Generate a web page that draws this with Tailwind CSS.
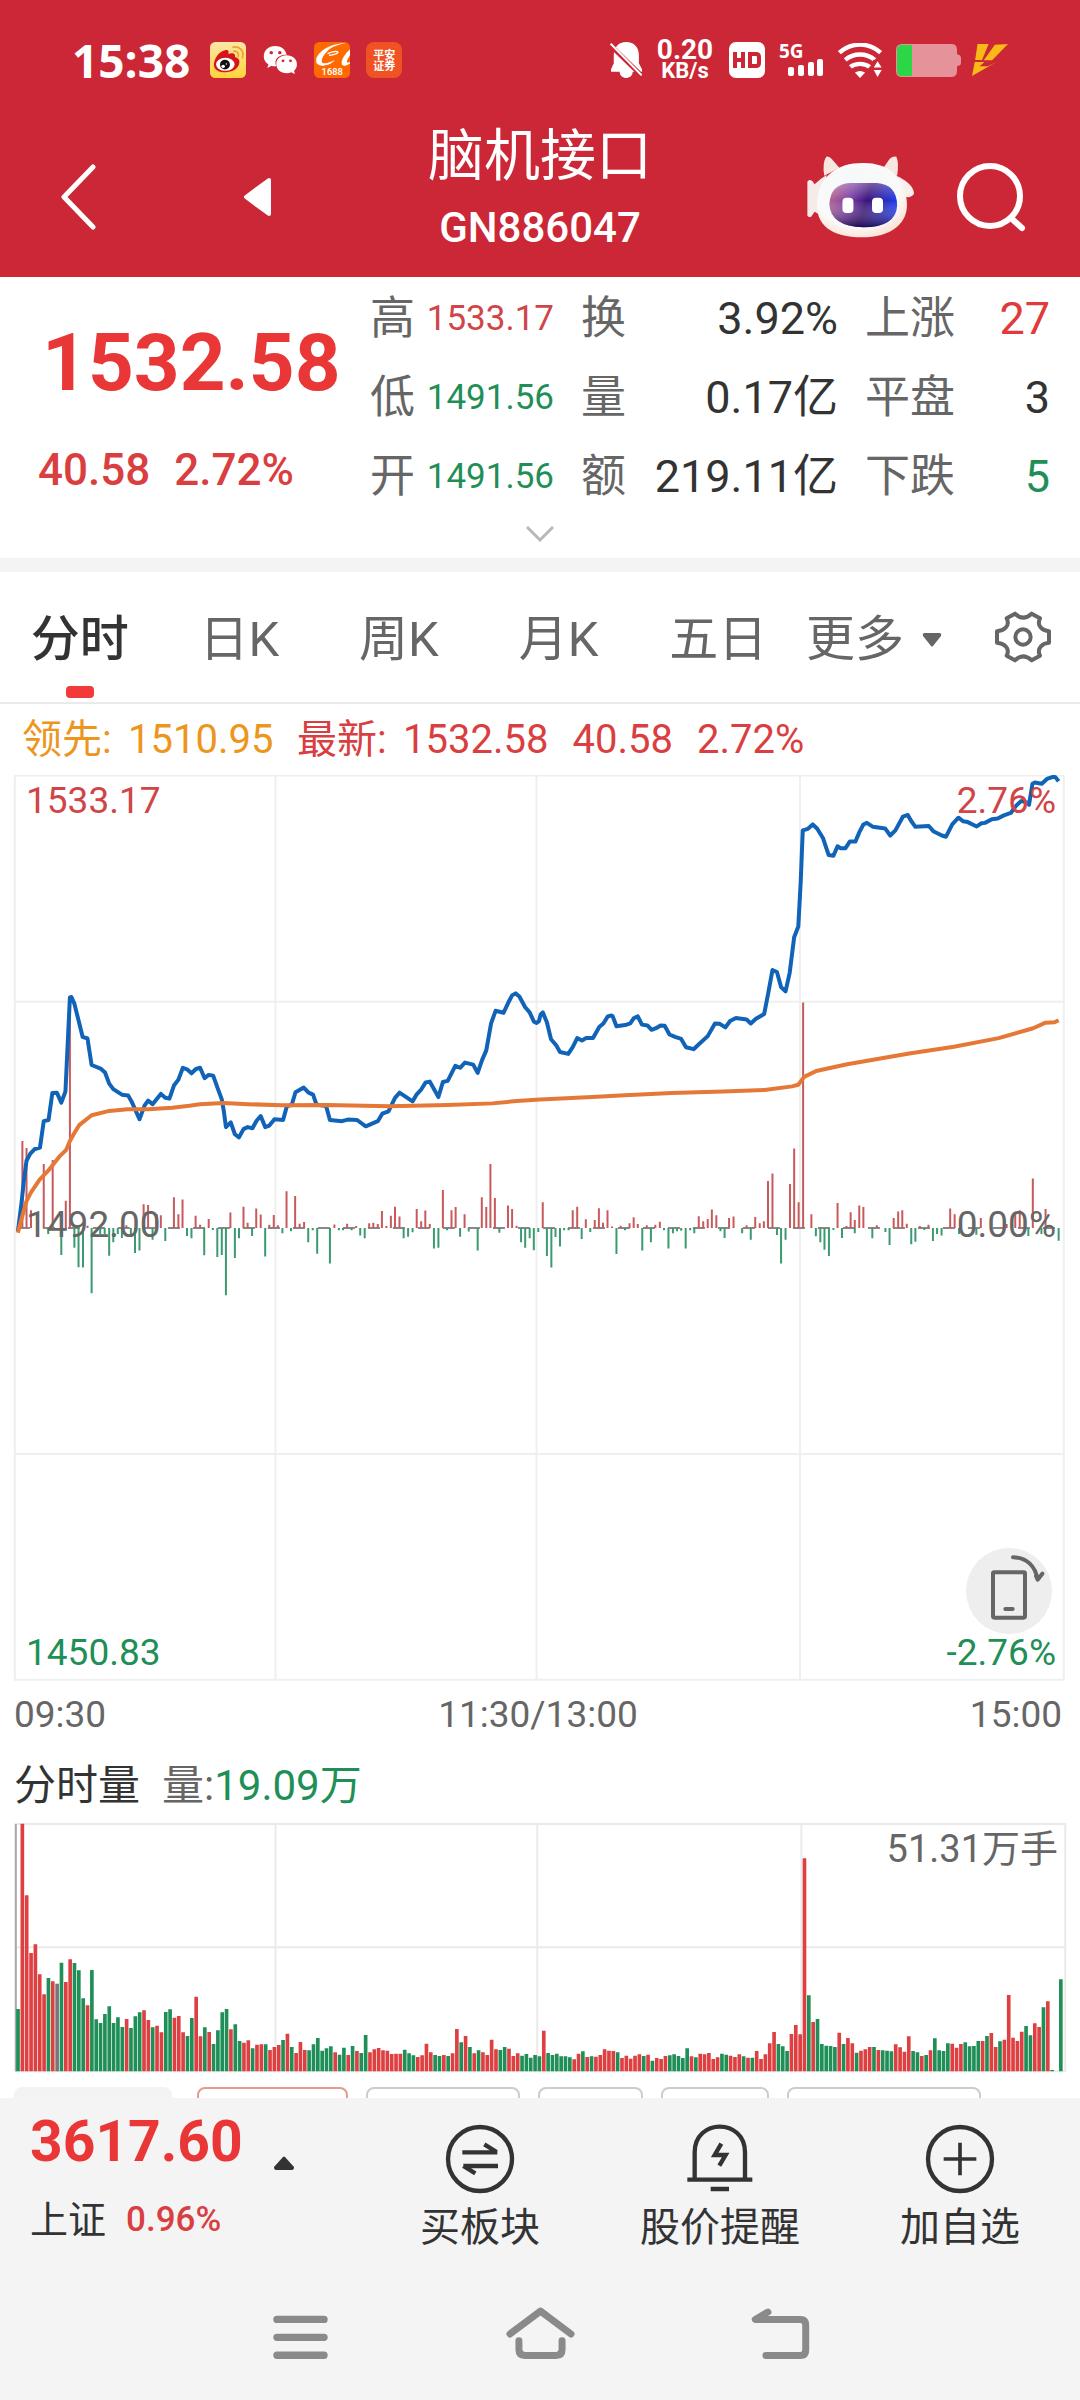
<!DOCTYPE html>
<html lang="zh-CN">
<head>
  <meta charset="UTF-8">
  <meta name="viewport" content="width=device-width, initial-scale=1">
  <title>脑机接口 GN886047</title>
  <script src="https://cdn.jsdelivr.net/npm/@tailwindcss/browser@4"></script>
</head>
<body class="bg-white font-[Roboto,'Noto_Sans_CJK_SC',sans-serif] text-[#333]">

  <header class="bg-[#cb2736] text-white">
    <!-- status bar -->
    <div class="flex h-[120px] items-center justify-between pr-[72px] pl-[72px] font-['Open_Sans','Noto_Sans_CJK_SC',sans-serif] font-bold">
      <div class="flex items-center gap-4">
        <span class="mr-1 text-[46px] leading-[48px]">15:38</span>
        <svg class="size-9" viewBox="610 129 101 105" preserveAspectRatio="none">
          <defs>
            <linearGradient id="weibo" x1="0" y1="0" x2="0" y2="1"><stop offset="0" stop-color="#fbe6a6"/><stop offset="1" stop-color="#ffd43a"/></linearGradient>
          </defs>
          <rect x="610" y="129" width="101" height="105" rx="15" fill="url(#weibo)"/>
          <path d="M621 195C621 178 635 157 652 153C662 151 664 158 661 164C672 159 683 162 680 173C692 176 695 186 691 195C686 210 668 217 651 217C634 217 621 209 621 195Z" fill="#d5141c"/>
          <ellipse cx="653" cy="194" rx="26" ry="19" fill="#fff"/>
          <circle cx="652" cy="195" r="14" fill="#111"/>
          <circle cx="647" cy="200" r="5" fill="#fff"/><circle cx="656" cy="193" r="2" fill="#fff"/>
          <path d="M677 156C686 154 692 162 689 171M675 144C694 140 707 157 701 175" fill="none" stroke="#f0a02c" stroke-width="5" stroke-linecap="round"/>
        </svg>
        <svg class="size-9" viewBox="762 129 101 105" preserveAspectRatio="none">
          <path d="M799 141C780 141 767 154 767 171C767 181 772 189 780 194L777 205L789 198C794 200 798 200 802 200C794 180 808 165 831 166C828 151 815 141 799 141Z" fill="#fff"/>
          <path d="M831 168C814 168 802 179 802 194C802 209 815 220 831 220C836 220 840 219 844 217L854 222L852 213C857 208 860 202 860 194C860 179 847 168 831 168Z" fill="#fff"/>
          <g fill="#cb2736"><circle cx="788" cy="160" r="5"/><circle cx="812" cy="160" r="5"/><circle cx="821" cy="184" r="4"/><circle cx="842" cy="184" r="4"/></g>
        </svg>
        <svg class="size-9" viewBox="915 129 101 105" preserveAspectRatio="none">
          <rect x="915" y="129" width="101" height="105" rx="15" fill="#ff6a00"/>
          <path d="M1006 131C975 133 936 145 923 173C917 190 924 199 942 198C955 197 968 190 974 181C959 191 940 195 937 187C935 177 944 165 955 153C964 143 984 136 1006 131Z" fill="#fff"/>
          <path d="M953 163C965 158 978 155 982 158C983 163 970 167 957 168" fill="none" stroke="#fff" stroke-width="4"/>
          <path d="M1016 150C1001 164 990 182 993 194C997 201 1008 198 1016 192V187C1006 192 1003 188 1016 168Z" fill="#fff"/>
          <text x="966" y="226" text-anchor="middle" fill="#fff" font-size="26" font-weight="600" font-family="Roboto">1688</text>
        </svg>
        <span class="flex size-9 flex-col items-center justify-center rounded-lg bg-[#f05223] text-[11px] leading-[11px]"><span>平安</span><span>证券</span></span>
      </div>

      <div class="flex items-center">
        <svg class="mr-[14px] h-9 w-8" viewBox="203 126 93 108" preserveAspectRatio="none">
          <path d="M214 166C214 142 228 126 250 126C273 126 287 142 287 166V190L296 208V215H269C268 240 232 240 231 215H206V208L214 190Z" fill="#fff"/>
          <path d="M200 132L300 232" stroke="#cb2736" stroke-width="14"/>
          <path d="M205 131L295 226" stroke="#fff" stroke-width="6"/>
        </svg>
        <span class="mr-[15px] flex w-[58px] flex-col items-center font-[Roboto] text-[28px] leading-[22px]"><span>0.20</span><span class="text-[22px] leading-[20px]">KB/s</span></span>
        <svg class="mr-3.5 size-9" viewBox="0 0 36 36">
          <rect width="36" height="36" rx="7" fill="#fff"/>
          <path d="M6 10V26M14 10V26M6 18H14M21 12H27Q30 12 30 15V21Q30 24 27 24H21Z" fill="none" stroke="#cb2736" stroke-width="4"/>
        </svg>
        <span class="relative mr-3.5 h-8 w-[45px]">
          <span class="absolute -top-1 left-0 text-[19px] leading-[22px]">5G</span>
          <svg class="absolute right-0 bottom-0 h-[18px] w-9" viewBox="0 0 36 18" fill="#fff">
            <rect y="9" width="6" height="9" rx="2"/><rect x="10" y="7" width="6" height="11" rx="2"/><rect x="20" y="4" width="6" height="14" rx="2"/><rect x="29" y="1" width="6" height="17" rx="2"/>
          </svg>
        </span>
        <svg class="mr-3.5 h-[35px] w-11" viewBox="866 128 128 104" preserveAspectRatio="none">
          <path d="M870 157C905 125 955 125 990 157M887 178C912 157 948 157 973 178M902 199C917 187 943 187 958 199" fill="none" stroke="#fff" stroke-width="13"/>
          <path d="M915 216Q930 206 945 216L930 232Z" fill="#fff"/>
          <path d="M968 178H994V232H968Z" fill="#cb2736"/>
          <path d="M970 201L981 182L993 201ZM970 208L981 229L993 208Z" fill="#fff"/>
        </svg>
        <svg class="mr-[11px] h-[33px] w-[65px]" viewBox="0 0 65 33">
          <path d="M6 0H56Q61 0 61 6V10Q65 11 65 14V19Q65 22 61 22V27Q61 33 55 33H6Q0 33 0 27V6Q0 0 6 0Z" fill="#e5929a"/>
          <path d="M6 1H16V32H6Q1 32 1 27V6Q1 1 6 1Z" fill="#2bd647"/>
        </svg>
        <svg class="h-8 w-9" viewBox="1254 135 104 92" preserveAspectRatio="none" fill="#f9b916">
          <path d="M1270 135H1302L1283 181H1263ZM1320 137L1358 135L1312 182H1288ZM1262 187H1290L1276 199H1300L1326 186L1254 227Z"/>
        </svg>
      </div>
    </div>

    <!-- title row -->
    <div class="grid h-[157px] grid-cols-[1fr_auto_1fr] items-center pb-1">
      <div class="flex items-center gap-[147px] pl-[60px]">
        <button aria-label="返回">
          <svg class="h-[66px] w-9" viewBox="0 0 36 66" fill="none" stroke="#fff" stroke-width="5" stroke-linecap="round" stroke-linejoin="round"><path d="M33 3L4 33L33 63"/></svg>
        </button>
        <button aria-label="上一个">
          <svg class="h-10 w-7" viewBox="0 0 28 40" fill="#fff" stroke="#fff" stroke-width="4" stroke-linejoin="round"><path d="M26 3V37L3 20Z"/></svg>
        </button>
      </div>
      <div class="self-start pt-1 text-center">
        <h1 class="text-[56px] leading-[64px]">脑机接口</h1>
        <p class="mt-4 text-[42px] leading-[48px] font-medium">GN886047</p>
      </div>
      <div class="flex items-center justify-end gap-10 pr-[54px]">
        <button aria-label="智能助手">
          <svg class="h-[86px] w-[110px]" viewBox="775 455 320 258" preserveAspectRatio="none">
            <defs>
              <linearGradient id="face" x1="0" y1=".3" x2="1" y2=".5"><stop offset="0" stop-color="#b5658f"/><stop offset=".3" stop-color="#7b3fa6"/><stop offset=".55" stop-color="#3a1479"/><stop offset=".8" stop-color="#2a2bbb"/><stop offset="1" stop-color="#1d3cf0"/></linearGradient>
              <linearGradient id="visor" x1="0" y1="0" x2="0" y2="1"><stop offset="0" stop-color="#fff" stop-opacity=".3"/><stop offset=".4" stop-color="#fff" stop-opacity="0"/><stop offset="1" stop-color="#12003c" stop-opacity=".7"/></linearGradient>
              <radialGradient id="head" cx=".45" cy=".4" r=".62"><stop offset="0" stop-color="#f4f6f8"/><stop offset=".75" stop-color="#fafafa"/><stop offset="1" stop-color="#fbe3d6"/></radialGradient>
            </defs>
            <path d="M779 640V538Q784 528 794 537L800 546Q815 530 835 518L820 640L800 628L790 643Q783 646 779 640Z" fill="#f7ebe9"/>
            <path d="M1042 522Q1090 548 1089 575Q1080 588 1062 583Z" fill="#f8efec"/>
            <path d="M828 520Q822 480 834 463Q842 460 850 470L872 496ZM1040 520Q1046 480 1038 463Q1026 460 1018 470L1002 494Z" fill="#f8e6e0"/>
            <path d="M938 482C1010 480 1064 520 1068 595C1076 665 1020 705 938 705C850 705 800 668 808 595C814 520 868 482 938 482Z" fill="url(#head)"/>
            <path d="M905 542H980Q1040 546 1040 610Q1036 674 942 675Q846 672 843 605Q846 545 905 542Z" fill="url(#face)"/>
            <path d="M905 542H980Q1040 546 1040 610Q1036 674 942 675Q846 672 843 605Q846 545 905 542Z" fill="url(#visor)"/>
            <rect x="881" y="586" width="32" height="46" rx="12" fill="#fff"/><rect x="967" y="586" width="32" height="46" rx="12" fill="#fff"/>
          </svg>
        </button>
        <button aria-label="搜索">
          <svg class="size-[70px]" viewBox="0 0 70 70" fill="none" stroke="#fff" stroke-width="6" stroke-linecap="round"><circle cx="34" cy="34" r="30"/><path d="M56 57L66 66"/></svg>
        </button>
      </div>
    </div>
  </header>

  <main>
    <!-- quote -->
    <section class="border-b-[14px] border-[#f4f4f4]">
      <div class="flex pt-0.5 pr-[30px]">
        <div class="w-[370px] pt-11 pl-[38px] text-[#e93737]">
          <p class="pl-1 text-[80px] leading-[80px] font-bold">1532.58</p>
          <p class="mt-[43px] flex gap-6 text-[44px] leading-[48px] font-medium text-[#d93f41]"><span>40.58</span><span>2.72%</span></p>
        </div>
        <dl class="grid flex-1 grid-cols-[184fr_257fr_185fr] gap-x-[27px] text-[45px] leading-[79px] [&_dt]:text-[#666] [&>div]:flex [&>div]:items-center [&>div]:justify-between">
          <div><dt>高</dt><dd class="text-[35px] text-[#d04547]">1533.17</dd></div>
          <div><dt>换</dt><dd>3.92%</dd></div>
          <div><dt>上涨</dt><dd class="text-[#e03a3c]">27</dd></div>
          <div><dt>低</dt><dd class="text-[35px] text-[#1f8f57]">1491.56</dd></div>
          <div><dt>量</dt><dd>0.17亿</dd></div>
          <div><dt>平盘</dt><dd>3</dd></div>
          <div><dt>开</dt><dd class="text-[35px] text-[#1f8f57]">1491.56</dd></div>
          <div><dt>额</dt><dd>219.11亿</dd></div>
          <div><dt>下跌</dt><dd class="text-[#1f8f57]">5</dd></div>
        </dl>
      </div>
      <button class="flex h-[42px] w-full justify-center pt-2.5" aria-label="展开">
        <svg class="h-4 w-7" viewBox="0 0 28 16" fill="none" stroke="#b8b8b8" stroke-width="3"><path d="M1 1L14 14L27 1"/></svg>
      </button>
    </section>

    <!-- period tabs -->
    <div class="flex h-[132px] items-center border-b-2 border-[#eaeaea] pr-[29px] text-[49px] leading-[56px] text-[#666]">
      <nav class="grid h-full flex-1 grid-cols-5 items-stretch [&>button]:pt-1.5">
        <button class="relative font-medium text-[#333]">分时<span class="absolute bottom-1 left-1/2 h-3 w-7 -translate-x-1/2 rounded-sm bg-[#f23a38]"></span></button>
        <button>日K</button>
        <button>周K</button>
        <button>月K</button>
        <button>五日</button>
      </nav>
      <button class="ml-2 flex h-full items-center gap-[18px] pt-1.5">更多<svg class="h-3.5 w-5" viewBox="0 0 20 14" fill="#666"><path d="M2 0H18Q20 1 19 3L11 13Q10 14 9 13L1 3Q0 1 2 0Z"/></svg></button>
      <button class="ml-[53px]" aria-label="设置">
        <svg class="size-14" viewBox="103 56 168 168" fill="none" stroke="#666" stroke-width="12" stroke-linejoin="round">
          <path d="M109 123C128 122 150 108 138 84L163 70Q187 94 213 70L238 84C226 108 248 122 265 123V157C248 158 226 172 238 196L213 210Q187 186 163 210L138 196C150 172 128 158 109 157Z"/>
          <circle cx="187" cy="140" r="23"/>
        </svg>
      </button>
    </div>

    <!-- price legend -->
    <div class="flex h-[71px] items-center pl-[22px] text-[40px] leading-[48px] text-[#d93f41]">
      <span class="flex w-[275px] text-[#ec961e]"><span class="w-[106px]">领先:</span>1510.95</span>
      <span class="w-[106px]">最新:</span>
      <span class="flex gap-6"><span>1532.58</span><span>40.58</span><span>2.72%</span></span>
    </div>

    <!-- intraday chart -->
    <div class="relative text-[37px] leading-[44px]">
      <svg class="block h-[906px] w-full" viewBox="0 190 3136 2290" preserveAspectRatio="none" fill="none">
        <g stroke="#efefef" stroke-width="2">
          <path vector-effect="non-scaling-stroke" d="M43 191H3089V2477H43ZM43 763H3089M43 1906H3089M800 191V2477M1558 191V2477M2323 191V2477"/>
        </g>
        <path vector-effect="non-scaling-stroke" d="M52 1335H3078" stroke="#888" stroke-width="2" stroke-dasharray="12 13"/>
        <path id="up" vector-effect="non-scaling-stroke" stroke="#c85a5c" stroke-width="2"/>
        <path id="down" vector-effect="non-scaling-stroke" stroke="#3b9a70" stroke-width="2"/>
        <polyline vector-effect="non-scaling-stroke" stroke="#1163b8" stroke-width="4" stroke-linejoin="round" points="52,1343 62,1275 70,1210 77,1165 88,1147 100,1136 116,1132 127,1065 141,1062 152,994 165,993 178,1018 190,990 203,752 207,751 216,768 228,810 240,852 254,856 266,923 292,932 305,942 317,970 329,984 354,998 372,1000 382,1015 405,1060 420,1025 430,1013 443,1022 467,996 480,1006 492,1008 505,975 518,960 531,930 543,934 556,944 569,933 581,930 594,956 606,948 619,950 633,984 644,1010 650,1040 656,1080 670,1068 682,1098 694,1106 707,1085 719,1080 733,1083 745,1064 757,1052 770,1080 782,1076 797,1060 822,1062 833,1027 847,1024 858,992 882,980 896,993 909,998 919,1023 947,1027 958,1062 993,1065 1010,1061 1037,1062 1062,1078 1097,1065 1110,1046 1128,1040 1147,1006 1160,993 1198,1015 1210,997 1223,985 1236,967 1248,965 1273,1004 1286,966 1300,963 1322,925 1336,930 1350,917 1374,922 1387,943 1400,910 1412,886 1426,818 1439,786 1462,791 1475,767 1487,747 1497,742 1508,750 1525,777 1538,790 1550,813 1558,817 1565,812 1570,795 1576,790 1588,815 1600,858 1615,873 1626,890 1650,895 1663,878 1676,855 1690,861 1702,855 1722,855 1740,827 1752,818 1765,800 1775,798 1779,800 1790,825 1815,822 1830,818 1840,805 1852,800 1864,821 1880,823 1892,834 1905,830 1918,823 1930,824 1944,846 1960,852 1978,857 1992,878 2014,883 2030,870 2055,850 2076,818 2090,819 2106,828 2120,812 2137,804 2168,808 2180,818 2195,806 2219,794 2231,740 2243,683 2256,688 2268,726 2281,737 2293,690 2306,600 2318,573 2325,460 2331,330 2346,326 2360,315 2373,326 2390,350 2406,392 2420,394 2432,370 2440,375 2455,375 2468,358 2484,358 2495,335 2507,315 2517,311 2535,321 2570,325 2585,343 2600,330 2622,295 2636,291 2645,305 2658,321 2697,319 2710,332 2735,343 2747,346 2765,315 2783,298 2797,307 2810,309 2836,320 2850,312 2860,311 2880,302 2897,300 2915,292 2935,286 2950,268 2965,256 2978,258 2988,265 2998,212 3005,209 3025,212 3040,200 3060,194 3065,196 3074,206"/>
        <polyline vector-effect="non-scaling-stroke" stroke="#e57837" stroke-width="4" stroke-linejoin="round" points="52,1347 60,1320 77,1267 90,1245 115,1213 140,1190 175,1152 192,1138 203,1115 216,1095 230,1075 266,1050 317,1039 370,1035 430,1035 500,1031 550,1026 580,1022 650,1019 720,1022 820,1025 950,1024 1130,1027 1300,1024 1430,1020 1500,1014 1568,1010 1720,1004 1800,1000 1950,994 2100,990 2220,986 2300,977 2318,973 2335,953 2370,938 2460,921 2640,894 2770,877 2900,855 3000,830 3036,816 3062,815 3074,810"/>
      </svg>
      <span class="absolute top-1 left-[26px] text-[#d04547]">1533.17</span>
      <span class="absolute top-1 right-6 text-[#d04547]">2.76%</span>
      <span class="absolute top-[428px] left-[26px] text-[#666]">1492.00</span>
      <span class="absolute top-[428px] right-6 text-[#666]">0.00%</span>
      <span class="absolute bottom-1.5 left-[26px] text-[#1f8f57]">1450.83</span>
      <span class="absolute right-6 bottom-1.5 text-[#1f8f57]">-2.76%</span>
      <button class="absolute right-7 bottom-[47px]" aria-label="横屏">
        <svg class="size-[86px]" viewBox="48 54 258 258" fill="none" stroke="#666" stroke-width="12" stroke-linecap="round" stroke-linejoin="round">
          <circle cx="177" cy="183" r="129" fill="#eee" stroke="none"/>
          <rect x="129" y="127" width="96" height="136" rx="4"/>
          <path d="M166 237H188"/>
          <path d="M189 82C230 82 256 108 263 149M258 138L263 149L277 131"/>
        </svg>
      </button>
    </div>
    <div class="flex h-[68px] items-center justify-between pr-[18px] pl-3.5 text-[37px] leading-[44px] text-[#666]">
      <span>09:30</span><span>11:30/13:00</span><span>15:00</span>
    </div>

    <!-- volume -->
    <div class="flex h-[74px] items-center pl-3.5 text-[42px] leading-[48px]">
      <span class="mr-[22px]">分时量</span><span class="text-[#666]">量:</span><span class="text-[#1f8f57]">19.09万</span>
    </div>
    <div class="relative">
      <svg class="block h-[250px] w-full" viewBox="0 129 3136 750" preserveAspectRatio="none" fill="none">
        <path vector-effect="non-scaling-stroke" stroke="#eaeaea" stroke-width="2" d="M45 132H3093V874H45ZM45 502H3093M800 132V874M1560 132V874M2327 132V874"/>
        <path vector-effect="non-scaling-stroke" stroke="#aaa" stroke-width="2" d="M46 132V874"/>
        <path id="vol-up" fill="#de3f41"/>
        <path id="vol-down" fill="#1f8f57"/>
        <path id="vol-flat" fill="#777"/>
      </svg>
      <span class="absolute top-1 right-[22px] text-[38px] leading-[44px] text-[#666]">51.31万手</span>
    </div>

    <!-- indicator chips, cut by the bottom bar -->
    <div class="flex h-[25px] overflow-hidden pt-3.5 pl-3.5 [&>button]:h-14 [&>button]:shrink-0 [&>button]:rounded-lg [&>button]:border-2 [&>button]:border-[#ccc]">
      <button class="mr-[25px] w-[158px] border-[#f3f3f3]! bg-[#f3f3f3]" aria-label="指标"></button>
      <button class="mr-[18px] w-[151px] border-[#e39b8c]!" aria-label="指标 1"></button>
      <button class="mr-[18px] w-[154px]" aria-label="指标 2"></button>
      <button class="mr-[18px] w-[105px]" aria-label="指标 3"></button>
      <button class="mr-[18px] w-[108px]" aria-label="指标 4"></button>
      <button class="w-[194px]" aria-label="指标 5"></button>
    </div>
  </main>

  <footer class="bg-[#f4f4f4]">
    <div class="grid h-[168px] grid-cols-[3fr_2fr_2fr_2fr]">
      <div class="pt-3 pl-[30px]">
        <p class="flex items-end gap-[31px] text-[57px] leading-[64px] font-bold text-[#e93737]">3617.60
          <svg class="mb-1 h-3.5 w-5" viewBox="0 0 20 14" fill="#333"><path d="M9 1Q10 0 11 1L20 11Q20 14 18 14H2Q0 14 0 11Z"/></svg>
        </p>
        <p class="mt-[22px] flex items-center gap-5 text-[38px] leading-[48px]">上证<span class="text-[35px] font-medium text-[#d93f41]">0.96%</span></p>
      </div>
      <button class="flex flex-col items-center pt-[26px] text-[40px] leading-[48px]">
        <svg class="mb-2.5 size-[70px]" viewBox="133 73 210 210" fill="none" stroke="#333" stroke-width="13"><circle cx="238" cy="178" r="96"/><path d="M185 158H290M251 134L288 157M292 199H188M224 221L188 199"/></svg>
        买板块
      </button>
      <button class="flex flex-col items-center pt-[26px] text-[40px] leading-[48px]">
        <svg class="mb-2.5 size-[70px]" viewBox="854 73 210 210" fill="none" stroke="#333" stroke-width="13"><path d="M883 240V158C883 55 1034 55 1034 158V240M861 240H1056M931 268H986M963 132L943 166H976L957 198"/></svg>
        股价提醒
      </button>
      <button class="flex flex-col items-center pt-[26px] text-[40px] leading-[48px]">
        <svg class="mb-2.5 size-[70px]" viewBox="133 73 210 210" fill="none" stroke="#333" stroke-width="13"><circle cx="238" cy="178" r="96"/><path d="M189 178H287M238 129V227" stroke-width="11"/></svg>
        加自选
      </button>
    </div>

    <nav class="flex h-[134px] justify-center gap-[167px] pt-[39px]">
      <button class="h-14" aria-label="最近任务">
        <svg class="h-14 w-[73px]" viewBox="-110 614 220 168" fill="none" stroke="#8a8a8a" stroke-width="22" stroke-linecap="round"><path d="M-71 657H71M-71 711H71M-71 765H71"/></svg>
      </button>
      <button class="h-14" aria-label="主页">
        <svg class="h-14 w-[73px]" viewBox="310 614 220 168" fill="none" stroke="#8a8a8a" stroke-width="21" stroke-linecap="round" stroke-linejoin="round"><path d="M328 701L420 632L512 701M355 721V748Q355 766 373 766H467Q485 766 485 748V721"/></svg>
      </button>
      <button class="h-14" aria-label="返回上级">
        <svg class="h-14 w-[73px]" viewBox="1030 614 220 168" fill="none" stroke="#8a8a8a" stroke-width="21" stroke-linecap="round" stroke-linejoin="round"><path d="M1102 635L1064 657H1200Q1216 657 1216 673V750Q1216 766 1200 766H1096"/></svg>
      </button>
    </nav>
  </footer>

  <script>
    // x,y of each bar tip, drawn from the zero line
    const ZERO = 1335;
    const up = '65,1115 77,1133 90,1290 127,1173 153,1163 191,1266 203,760 254,1329 367,1328 417,1275 430,1277 455,1300 467,1303 505,1257 518,1300 530,1263 568,1304 581,1327 606,1312 669,1296 707,1281 719,1322 744,1286 757,1301 782,1327 795,1302 807,1328 832,1242 857,1254 870,1324 883,1320 971,1326 1008,1324 1034,1330 1072,1323 1084,1322 1097,1325 1109,1292 1122,1330 1135,1304 1147,1281 1160,1306 1210,1287 1223,1318 1235,1291 1248,1325 1286,1239 1311,1290 1323,1282 1349,1300 1399,1257 1412,1282 1424,1173 1437,1259 1475,1278 1487,1287 1500,1329 1576,1270 1663,1290 1676,1281 1701,1313 1727,1315 1739,1285 1751,1322 1764,1290 1777,1331 1802,1329 1828,1323 1840,1308 1852,1325 1878,1328 1903,1327 1916,1319 2029,1305 2042,1318 2055,1312 2067,1288 2080,1303 2117,1310 2130,1306 2168,1328 2193,1307 2206,1323 2218,1318 2230,1216 2243,1197 2294,1224 2306,1134 2319,1270 2332,765 2356,1300 2432,1272 2458,1330 2470,1295 2482,1315 2495,1278 2507,1282 2546,1328 2595,1310 2608,1293 2620,1290 2633,1324 2671,1330 2696,1327 2759,1286 2772,1300 2848,1310 2923,1325 2948,1300 2961,1290 2999,1210 3036,1287';
    const down = '140,1350 178,1403 216,1385 228,1434 241,1435 266,1500 291,1350 304,1350 317,1405 329,1371 342,1350 354,1360 380,1350 392,1398 405,1392 443,1365 480,1368 543,1355 556,1361 593,1404 618,1340 631,1408 644,1403 656,1505 682,1411 694,1361 732,1355 770,1407 820,1348 845,1343 895,1371 908,1341 921,1400 958,1425 984,1341 996,1341 1021,1341 1046,1354 1059,1361 1172,1361 1185,1357 1198,1346 1260,1387 1273,1385 1298,1341 1336,1357 1361,1344 1387,1392 1450,1347 1513,1371 1525,1385 1538,1361 1550,1391 1563,1345 1588,1406 1601,1435 1613,1358 1626,1382 1638,1341 1651,1341 1689,1363 1714,1345 1790,1401 1815,1341 1865,1392 1890,1371 1928,1341 1941,1387 1954,1348 1966,1343 1978,1342 1991,1387 2004,1341 2016,1348 2092,1343 2104,1360 2155,1348 2180,1365 2256,1353 2268,1425 2281,1365 2369,1356 2382,1371 2394,1390 2407,1406 2420,1340 2445,1360 2482,1348 2533,1361 2571,1345 2583,1378 2646,1376 2658,1370 2684,1340 2709,1368 2721,1350 2734,1354 2785,1350 2835,1352 2986,1355 3024,1350 3074,1367';
    const stems = s => s.split(' ').map(p => { const [x, y] = p.split(','); return `M${x} ${ZERO}V${y}`; }).join('');
    document.getElementById('up').setAttribute('d', stems(up));
    document.getElementById('down').setAttribute('d', stems(down));

    // one bar a minute: R rise, G fall, N flat, followed by the bar's top
    const volume = 'G687 R131 R346 R519 R493 R583 R643 G594 R604 N611 G548 R606 R538 G549 G571 G655 R676 G570 G718 G729 G702 G679 G729 G712 G741 R717 G744 G709 G697 R691 R720 G742 R737 R757 G696 G688 R713 R708 R757 G768 G714 R650 R769 G742 R756 G792 G751 G697 G687 R748 G733 G783 R788 R781 G805 R794 R793 G793 R810 R801 R795 G780 R761 G801 R819 R786 R810 G811 G793 G774 G812 G805 G799 R817 G824 G803 R825 G798 R813 G819 G765 R817 R808 R804 R811 R812 R822 R821 R821 G809 G820 G826 R831 R826 R791 R817 G825 G828 R825 G828 R820 R747 G787 R768 G801 R820 G811 R817 R825 R779 R808 G810 G801 R806 R828 R820 G827 G822 G833 G825 G829 R752 G819 G825 G821 G829 G829 G832 R838 R821 G814 R831 G829 R830 R825 R808 R812 R813 G817 R834 R827 R836 R827 R823 G828 R824 G842 R834 R837 R828 G826 G823 G828 G834 G805 R829 G832 R821 R823 R819 R837 R832 G821 G824 R827 R831 R823 G829 R833 G833 R813 R837 R823 R790 R756 G792 G799 G813 R762 R735 R763 R235 G646 R726 G717 G792 G797 G798 G801 R758 G792 R774 R790 G818 R812 R808 R801 G801 R810 G811 G812 G814 R793 R802 R815 R769 G813 G817 R828 G825 R811 G775 G811 G813 G790 R791 R803 R792 G787 G799 G798 G783 R783 G768 R759 R801 G784 R779 R645 R773 R783 R755 G738 G766 R730 R741 G682 R664 G870 G874 G598'.split(' ');
    const bars = { R: '', G: '', N: '' };
    volume.forEach((v, i) => {
      const x = (47 + i * 12.617).toFixed(1);
      bars[v[0]] += `M${x} 874V${v.slice(1)}h10.6V874Z`;
    });
    document.getElementById('vol-up').setAttribute('d', bars.R);
    document.getElementById('vol-down').setAttribute('d', bars.G);
    document.getElementById('vol-flat').setAttribute('d', bars.N);
  </script>
</body>
</html>
